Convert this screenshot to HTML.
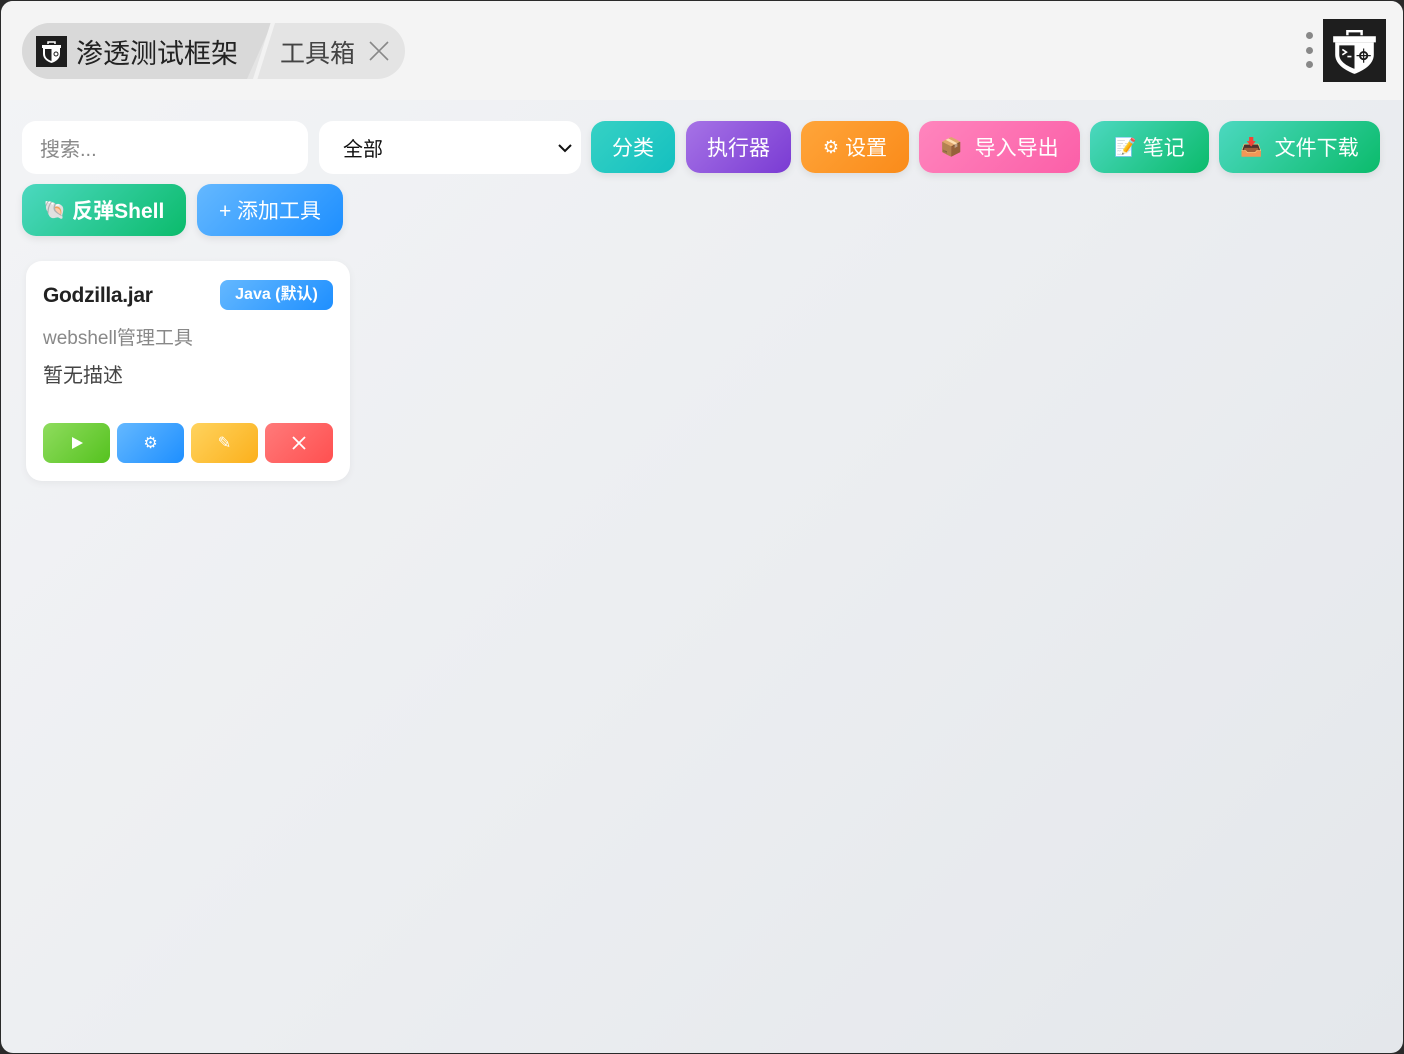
<!DOCTYPE html>
<html><head><meta charset="utf-8"><style>
*{box-sizing:border-box;margin:0;padding:0}
body{width:1404px;height:1054px;background:#2a2a2a;font-family:"Liberation Sans","Noto Sans CJK SC",sans-serif;overflow:hidden;position:relative}
.win{position:absolute;left:1px;top:1px;width:1402px;height:1052px;border-radius:12px;overflow:hidden;background:linear-gradient(135deg,#f3f4f6 0%,#eceef1 50%,#e4e7eb 100%)}
.hdr{position:absolute;left:0;top:0;width:100%;height:99px;background:#f4f4f4}
.a{position:absolute}
.btn{position:absolute;height:52px;top:120px;border-radius:14px;color:#fff;font-size:21px;display:flex;align-items:center;justify-content:center;box-shadow:0 3px 8px rgba(0,0,0,.08);gap:6px}
.ab{position:absolute;top:422px;height:40px;border-radius:8px;display:flex;align-items:center;justify-content:center;color:#fff;font-size:16px}
</style></head><body><div class="win">
<div class="hdr"></div>
<div class="a" style="left:21px;top:22px;width:383px;height:56px;border-radius:28px;background:#e4e4e4;overflow:hidden">
 <div class="a" style="left:0;top:0;width:250px;height:56px;background:#d9d9d9;clip-path:polygon(0 0,100% 0,90% 100%,0 100%)"></div>
 <div class="a" style="left:231px;top:0;width:22px;height:56px;background:#f2f2f2;clip-path:polygon(80% 0,100% 0,20% 100%,0 100%)"></div>
</div>
<svg class="a" style="left:35px;top:35px" width="31" height="31" viewBox="0 0 31 31"><rect width="31" height="31" fill="#1e1e1e"/><path d="M12 8v-2h7v2" stroke="#fff" stroke-width="1.5" fill="none"/><path d="M6 9h19v3h-19z" fill="#fff"/><path d="M7 12h17v6c0 5-5 8-8.5 9c-3.5-1-8.5-4-8.5-9z" fill="#fff"/><path d="M9 13h6.5v12c-3-1-6.5-3-6.5-7z" fill="#1e1e1e"/><circle cx="20" cy="18" r="2" stroke="#1e1e1e" fill="none"/></svg>
<div class="a" style="left:75px;top:31px;font-size:27px;color:#222">渗透测试框架</div>
<div class="a" style="left:279px;top:33px;font-size:25px;color:#444">工具箱</div>
<svg class="a" style="left:367px;top:39px" width="22" height="22"><path d="M2 2L20 20M20 2L2 20" stroke="#888" stroke-width="1.6"/></svg>
<div class="a" style="left:1305px;top:31px;width:7px;height:7px;border-radius:50%;background:#888"></div>
<div class="a" style="left:1305px;top:46px;width:7px;height:7px;border-radius:50%;background:#888"></div>
<div class="a" style="left:1305px;top:60px;width:7px;height:7px;border-radius:50%;background:#888"></div>
<svg class="a" style="left:1322px;top:18px" width="63" height="63" viewBox="0 0 31 31"><rect width="31" height="31" fill="#1e1e1e"/><path d="M12 8v-2h7v2" stroke="#fff" stroke-width="1.2" fill="none"/><path d="M5 8.5h21v3h-21z" fill="#fff"/><path d="M6 11.5h19v6c0 5-5.5 8-9.5 9.5c-4-1.5-9.5-4.5-9.5-9.5z" fill="#fff"/><path d="M8 13h7.5v11.5c-3.5-1.3-7.5-3.5-7.5-7z" fill="#1e1e1e"/><path d="M9.5 15l2 1.3l-2 1.3M12 18.5h2" stroke="#fff" stroke-width=".8" fill="none"/><circle cx="20" cy="18" r="1.8" stroke="#1e1e1e" stroke-width=".9" fill="none"/><path d="M20 14.5v7M16.5 18h7" stroke="#1e1e1e" stroke-width=".6"/></svg>

<div class="a" style="left:21px;top:120px;width:286px;height:53px;background:#fff;border-radius:14px;font-size:20px;color:#888;padding:12px 0 0 18px">搜索...</div>
<div class="a" style="left:318px;top:120px;width:262px;height:53px;background:#fff;border-radius:14px;font-size:20px;color:#111;padding:12px 0 0 24px">全部</div>
<svg class="a" style="left:556px;top:141px" width="16" height="12"><path d="M2 3l6 6l-6 0" stroke="none" fill="none"/><path d="M2 3l6 6l6-6" stroke="#111" stroke-width="2" fill="none"/></svg>

<div class="btn" style="left:590px;width:84px;background:linear-gradient(135deg,#36d1c4,#14c0c0)">分类</div>
<div class="btn" style="left:685px;width:105px;background:linear-gradient(135deg,#a673e6,#7a3bd3)">执行器</div>
<div class="btn" style="left:800px;width:108px;background:linear-gradient(135deg,#ffa53a,#fa8b1a)"><span style="font-size:18px">⚙</span>设置</div>
<div class="btn" style="left:918px;width:161px;background:linear-gradient(135deg,#ff85bd,#fb5fa8)"><span style="font-size:18px">📦</span>&nbsp;导入导出</div>
<div class="btn" style="left:1089px;width:119px;background:linear-gradient(135deg,#4cd8c0,#0bbb6b)"><span style="font-size:18px">📝</span>笔记</div>
<div class="btn" style="left:1218px;width:161px;background:linear-gradient(135deg,#4cd8c0,#0bbb6b)"><span style="font-size:18px">📥</span>&nbsp;文件下载</div>
<div class="btn" style="left:21px;top:183px;width:164px;background:linear-gradient(135deg,#4cd8c0,#0bbb6b);font-weight:bold"><span style="font-size:18px;font-weight:normal">🐚</span>反弹Shell</div>
<div class="btn" style="left:196px;top:183px;width:146px;background:linear-gradient(135deg,#64b8ff,#1e8fff)">+ 添加工具</div>

<div class="a" style="left:25px;top:260px;width:324px;height:220px;background:#fff;border-radius:16px;box-shadow:0 2px 8px rgba(0,0,0,.05)"></div>
<div class="a" style="left:42px;top:283px;font-size:21px;color:#222;font-weight:600;letter-spacing:-0.3px">Godzilla.jar</div>
<div class="a" style="left:219px;top:279px;width:113px;height:30px;border-radius:8px;background:linear-gradient(135deg,#64b8ff,#1e8fff);color:#fff;font-size:16px;font-weight:bold;text-align:center;line-height:30px">Java (默认)</div>
<div class="a" style="left:42px;top:322px;font-size:19px;color:#888">webshell管理工具</div>
<div class="a" style="left:42px;top:358px;font-size:20px;color:#444">暂无描述</div>
<div class="ab" style="left:42px;width:67px;background:linear-gradient(135deg,#8fdc5e,#55c21f)"><svg width="14" height="14"><path d="M2 1l11 6l-11 6z" fill="#fff"/></svg></div>
<div class="ab" style="left:116px;width:67px;background:linear-gradient(135deg,#64b8ff,#1e8fff)">⚙</div>
<div class="ab" style="left:190px;width:67px;background:linear-gradient(135deg,#ffd35e,#fbb01c)">✎</div>
<div class="ab" style="left:264px;width:68px;background:linear-gradient(135deg,#ff7a7a,#ff5050)"><svg width="14" height="14"><path d="M1 1L13 13M13 1L1 13" stroke="#fff" stroke-width="1.8"/></svg></div>
</div></body></html>
